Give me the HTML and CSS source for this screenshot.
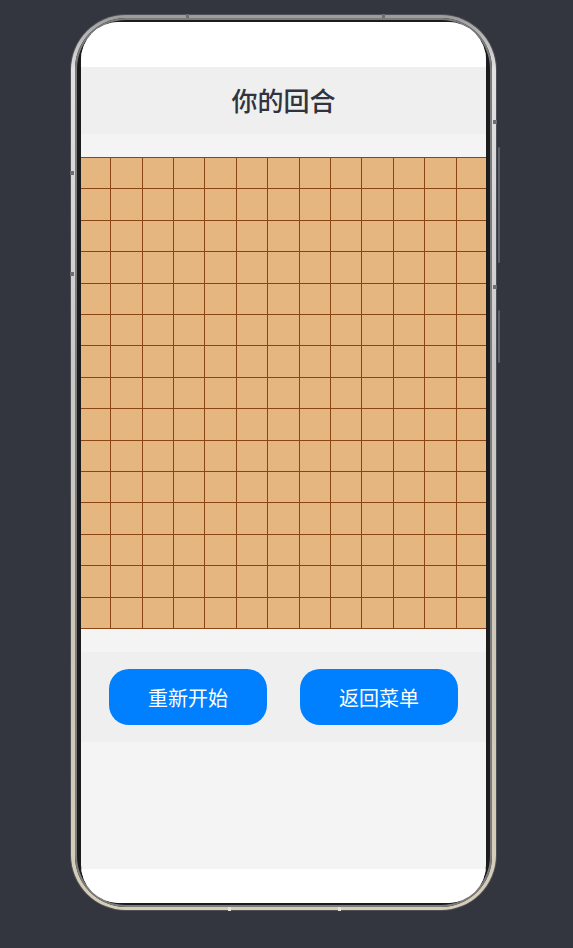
FILE: index.html
```html
<!DOCTYPE html>
<html lang="zh-CN">
<head>
  <meta charset="UTF-8" />
  <meta name="viewport" content="width=device-width, initial-scale=1.0" />
  <title>五子棋 - 对局</title>
  <link rel="stylesheet" href="styles.css">
</head>
<body>
  <div class="stage">
    <div class="phone">
      <span class="side-key key-power"></span>
      <span class="side-key key-volume"></span>
      <span class="band band-top band-t1"></span>
      <span class="band band-top band-t2"></span>
      <span class="band band-bottom band-b1"></span>
      <span class="band band-bottom band-b2"></span>
      <span class="band band-left band-l1"></span>
      <span class="band band-left band-l2"></span>
      <span class="band band-right band-r1"></span>
      <span class="band band-right band-r2"></span>

      <div class="rim">
        <div class="bezel">
          <div class="screen">
            <div class="status-bar"></div>

            <header class="turn-bar">
              <h1 class="turn-title" id="turn">你的回合</h1>
            </header>

            <div class="board-wrap">
              <div class="board" id="board"></div>
            </div>

            <div class="actions">
              <button class="btn" onclick="restart()">重新开始</button>
              <button class="btn">返回菜单</button>
            </div>

            <div class="filler"></div>
            <div class="home-bar"></div>
          </div>
        </div>
      </div>
    </div>
  </div>

  <script>
    const SIZE = 15;
    const board = document.getElementById('board');

    function renderBoard() {
      board.innerHTML = '';
      for (let i = 0; i < SIZE * SIZE; i++) {
        const cell = document.createElement('div');
        cell.className = 'cell';
        board.appendChild(cell);
      }
    }

    function restart() {
      document.getElementById('turn').innerText = '你的回合';
      renderBoard();
    }

    renderBoard();
  </script>
</body>
</html>
```

FILE: styles.css
```css
* {
  box-sizing: border-box;
  font-family: 'Noto Sans CJK SC', 'Noto Sans', sans-serif;
}
body {
  margin: 0;
  padding: 0;
  background-color: #33363f;
}
.stage {
  padding: 14px 0 0 70px;
}

/* phone frame */
.phone {
  position: relative;
  width: 427px;
  height: 897px;
  padding: 1px;
  border-radius: 56px;
  background: #4e5056;
}
.rim {
  height: 100%;
  padding: 3px 4px;
  border-radius: 55px;
  background: linear-gradient(180deg, #9b9b9b 0%, #e2e2e2 6%, #c9c9c9 40%, #cfc8b8 70%, #d6cdb9 100%);
}
.bezel {
  height: 100%;
  padding: 4px 6px;
  border-radius: 51px;
  background: #1c1c1e;
  box-shadow: inset 0 0 0 2px #7c7c7c;
}
.screen {
  height: 100%;
  border-radius: 38px;
  overflow: hidden;
  background: #f4f4f4;
  display: flex;
  flex-direction: column;
}
.side-key {
  position: absolute;
  right: -3px;
  width: 2px;
  border-radius: 1px;
  background: #5e6169;
}
.key-power {
  top: 133px;
  height: 116px;
}
.key-volume {
  top: 296px;
  height: 53px;
}
.band {
  position: absolute;
  background: #6c6e73;
}
.band-top, .band-bottom {
  width: 3px;
  height: 4px;
}
.band-top { top: 0; }
.band-bottom { bottom: 0; background: #e8e2d4; }
.band-t1 { left: 116px; }
.band-t2 { left: 312px; }
.band-b1 { left: 158px; }
.band-b2 { left: 268px; }
.band-left, .band-right {
  width: 4px;
  height: 4px;
}
.band-left { left: 0; }
.band-right { right: 0; }
.band-l1 { top: 157px; }
.band-l2 { top: 258px; }
.band-r1 { top: 106px; }
.band-r2 { top: 271px; }

/* screen content */
.status-bar {
  height: 45px;
  background: #fff;
}
.turn-bar {
  height: 67px;
  padding-bottom: 3px;
  background: #efefef;
  display: flex;
  align-items: center;
  justify-content: center;
}
.turn-title {
  margin: 0;
  font-size: 26px;
  font-weight: 500;
  color: #2f3440;
}
.board-wrap {
  margin-top: 23px;
  display: flex;
  justify-content: center;
  overflow: hidden;
}
.board {
  flex-shrink: 0;
  width: 472px;
  height: 472px;
  padding: 1px;
  display: grid;
  grid-template-columns: repeat(15, 1fr);
  grid-template-rows: repeat(15, 1fr);
  gap: 1px;
  background: #8b4513;
}
.cell {
  background: #e5b680;
}
.actions {
  margin-top: 23px;
  height: 90px;
  padding: 0 28px;
  background: #efefef;
  display: flex;
  align-items: center;
  justify-content: space-between;
}
.btn {
  width: 158px;
  height: 56px;
  border: none;
  border-radius: 20px;
  background: #0080ff;
  color: #fff;
  font-size: 20px;
  cursor: pointer;
}
.filler {
  flex: 1;
}
.home-bar {
  height: 34px;
  background: #fff;
}
```
